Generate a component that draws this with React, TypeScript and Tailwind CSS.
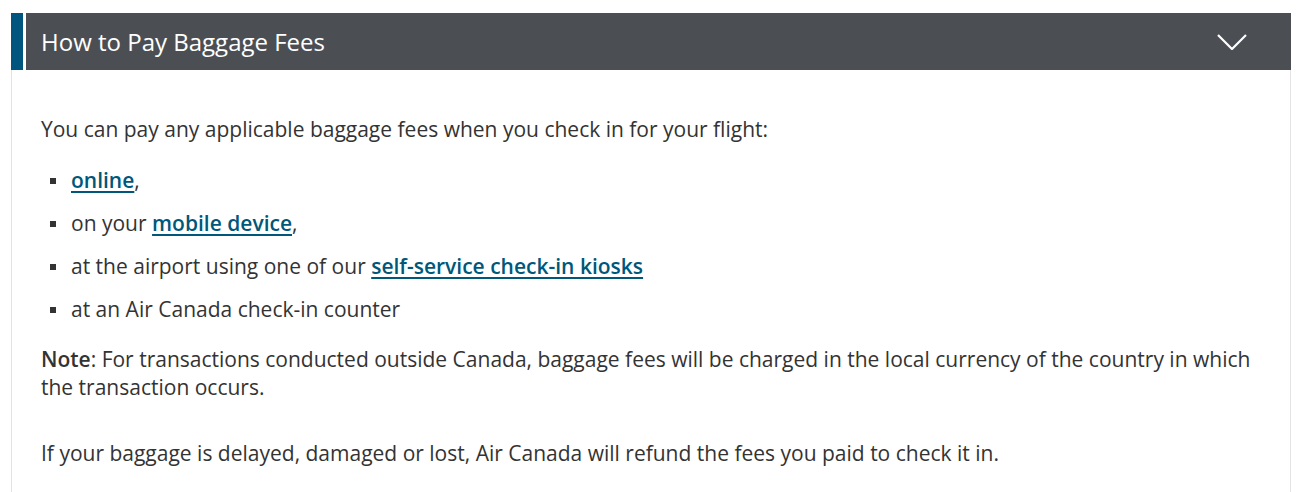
export default function App() {
  return (
    <div className="min-h-screen bg-white pt-[13px] pl-[11px] pr-[14px] font-['Open_Sans',sans-serif] text-[#333333]">
      <div className="flex h-[57px]">
        <div className="w-[12px] bg-[#00557f]" />
        <div className="w-[3px] bg-white" />
        <div className="flex flex-1 items-center justify-between bg-[#4b4f54] pl-[15px] pr-[44px]">
          <h2 className="text-[24px] text-white">How to Pay Baggage Fees</h2>
          <svg width="30" height="16" viewBox="0 0 30 16" fill="none" stroke="white" strokeWidth="2.2">
            <path d="M1 1 L15 15 L29 1" />
          </svg>
        </div>
      </div>
      <div className="border-x border-[#e3e3e3] px-[29px] pt-[45px] pb-[30px] text-[21px] leading-[28px]">
        <p>You can pay any applicable baggage fees when you check in for your flight:</p>
        <ul className="mt-[23px] flex flex-col gap-[15px] pl-[9px]">
          <li className="flex items-center">
            <span className="mr-[15px] inline-block h-[6px] w-[6px] translate-y-[1px] bg-[#333333]" />
            <span>
              <a href="#" className="font-semibold text-[#00577a] underline underline-offset-[3px]">online</a>,
            </span>
          </li>
          <li className="flex items-center">
            <span className="mr-[15px] inline-block h-[6px] w-[6px] translate-y-[1px] bg-[#333333]" />
            <span>
              on your{" "}
              <a href="#" className="font-semibold text-[#00577a] underline underline-offset-[3px]">mobile device</a>,
            </span>
          </li>
          <li className="flex items-center">
            <span className="mr-[15px] inline-block h-[6px] w-[6px] translate-y-[1px] bg-[#333333]" />
            <span>
              at the airport using one of our{" "}
              <a href="#" className="font-semibold text-[#00577a] underline underline-offset-[3px]">self-service check-in kiosks</a>
            </span>
          </li>
          <li className="flex items-center">
            <span className="mr-[15px] inline-block h-[6px] w-[6px] translate-y-[1px] bg-[#333333]" />
            <span>at an Air Canada check-in counter</span>
          </li>
        </ul>
        <p className="mt-[22px]">
          <span className="font-semibold">Note</span>: For transactions conducted outside Canada, baggage fees will be charged in the local currency of the country in which the transaction occurs.
        </p>
        <p className="mt-[38px]">If your baggage is delayed, damaged or lost, Air Canada will refund the fees you paid to check it in.</p>
      </div>
    </div>
  );
}
